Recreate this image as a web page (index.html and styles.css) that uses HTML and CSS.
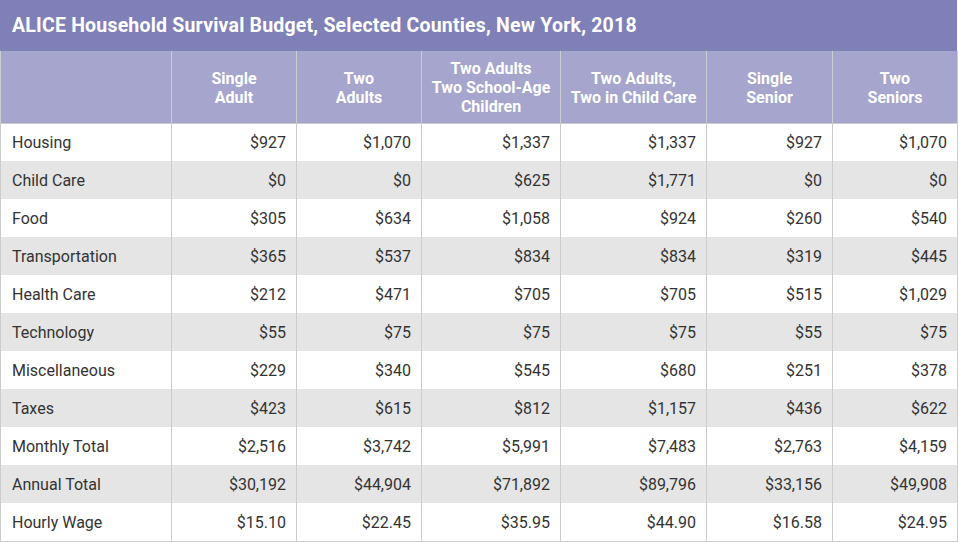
FILE: index.html
```html
<!DOCTYPE html>
<html>
<head>
<meta charset="utf-8">
<link rel="stylesheet" href="styles.css">
</head>
<body>
<div class="wrap">
  <div class="title">ALICE Household Survival Budget, Selected Counties, New York, 2018</div>
  <table class="budget">
    <colgroup>
      <col class="c0"><col class="c1"><col class="c2"><col class="c3"><col class="c4"><col class="c5"><col class="c6">
    </colgroup>
    <thead>
      <tr>
        <th></th>
        <th>Single<br>Adult</th>
        <th>Two<br>Adults</th>
        <th>Two Adults<br>Two School-Age<br>Children</th>
        <th>Two Adults,<br>Two in Child Care</th>
        <th>Single<br>Senior</th>
        <th>Two<br>Seniors</th>
      </tr>
    </thead>
    <tbody>
      <tr><td>Housing</td><td>$927</td><td>$1,070</td><td>$1,337</td><td>$1,337</td><td>$927</td><td>$1,070</td></tr>
      <tr><td>Child Care</td><td>$0</td><td>$0</td><td>$625</td><td>$1,771</td><td>$0</td><td>$0</td></tr>
      <tr><td>Food</td><td>$305</td><td>$634</td><td>$1,058</td><td>$924</td><td>$260</td><td>$540</td></tr>
      <tr><td>Transportation</td><td>$365</td><td>$537</td><td>$834</td><td>$834</td><td>$319</td><td>$445</td></tr>
      <tr><td>Health Care</td><td>$212</td><td>$471</td><td>$705</td><td>$705</td><td>$515</td><td>$1,029</td></tr>
      <tr><td>Technology</td><td>$55</td><td>$75</td><td>$75</td><td>$75</td><td>$55</td><td>$75</td></tr>
      <tr><td>Miscellaneous</td><td>$229</td><td>$340</td><td>$545</td><td>$680</td><td>$251</td><td>$378</td></tr>
      <tr><td>Taxes</td><td>$423</td><td>$615</td><td>$812</td><td>$1,157</td><td>$436</td><td>$622</td></tr>
      <tr><td>Monthly Total</td><td>$2,516</td><td>$3,742</td><td>$5,991</td><td>$7,483</td><td>$2,763</td><td>$4,159</td></tr>
      <tr><td>Annual Total</td><td>$30,192</td><td>$44,904</td><td>$71,892</td><td>$89,796</td><td>$33,156</td><td>$49,908</td></tr>
      <tr><td>Hourly Wage</td><td>$15.10</td><td>$22.45</td><td>$35.95</td><td>$44.90</td><td>$16.58</td><td>$24.95</td></tr>
    </tbody>
  </table>
</div>
</body>
</html>
```
FILE: styles.css
```css
html, body {
  margin: 0;
  padding: 0;
  background: #ffffff;
}
body {
  font-family: Roboto, "Liberation Sans", sans-serif;
}
.wrap {
  width: 957px;
}
.title {
  height: 51px;
  box-sizing: border-box;
  background: #8080b9;
  color: #ffffff;
  font-weight: 700;
  font-size: 19.5px;
  line-height: 51px;
  padding-left: 12px;
  letter-spacing: 0.2px;
}
.budget {
  width: 957px;
  border-collapse: collapse;
  table-layout: fixed;
}
.c0 { width: 171px; }
.c1 { width: 125px; }
.c2 { width: 125px; }
.c3 { width: 139px; }
.c4 { width: 146px; }
.c5 { width: 126px; }
.c6 { width: 125px; }
.budget th {
  background: #a5a5cd;
  color: #ffffff;
  font-weight: 700;
  font-size: 16px;
  line-height: 19px;
  height: 72px;
  padding: 2px 6px 0;
  box-sizing: border-box;
  text-align: center;
  vertical-align: middle;
  border: 1px solid #cccccc;
  border-top: none;
}
.budget td {
  height: 38px;
  box-sizing: border-box;
  padding: 1px 10px 0 11px;
  font-size: 16px;
  color: #333333;
  text-align: right;
  vertical-align: middle;
  border: 1px solid #cccccc;
  border-top: none;
  border-bottom: none;
}
.budget td:first-child {
  text-align: left;
}
.budget tbody tr:nth-child(even) td {
  background: #e5e5e5;
}
.budget tbody tr:last-child td {
  border-bottom: 1px solid #cccccc;
}
```
